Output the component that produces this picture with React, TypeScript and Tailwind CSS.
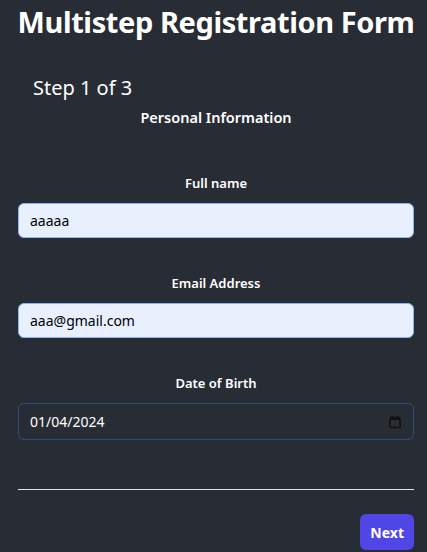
import React from "react";

function CalendarIcon() {
  return (
    <svg width="14" height="14" viewBox="0 0 14 14" fill="none">
      <rect x="2" y="2.5" width="10" height="10" rx="1" stroke="#111" strokeWidth="1.6" />
      <rect x="2" y="2.5" width="10" height="2.5" fill="#111" />
      <rect x="3.5" y="0.8" width="1.5" height="2.5" fill="#111" />
      <rect x="9" y="0.8" width="1.5" height="2.5" fill="#111" />
    </svg>
  );
}

export default function App() {
  return (
    <div
      className="h-[552px] w-[427px] bg-[#282c34] text-white overflow-hidden"
      style={{ fontFamily: '"Noto Sans", "Open Sans", sans-serif' }}
    >
      <div className="pl-[18px] pr-[13px]">
        <h1 className="-mx-[10px] whitespace-nowrap text-center text-[29px] font-bold leading-[44px] tracking-[-0.4px]">
          Multistep Registration Form
        </h1>
        <div className="mt-[30px] pl-[15px] text-[20px] leading-[28px]">Step 1 of 3</div>
        <div className="text-center text-[14.5px] font-semibold leading-[20px] mt-[5px]">
          Personal Information
        </div>

        <div className="mt-[47px] flex flex-col">
          <label className="text-center text-[13px] font-semibold leading-[18px]">Full name</label>
          <input
            readOnly
            defaultValue="aaaaa"
            className="mt-[11px] h-[35px] w-full rounded-[6px] border border-[#8ab4f8] bg-[#e8f0fe] px-[11px] text-[14px] text-black outline-none"
          />
          <label className="mt-[36px] text-center text-[13px] font-semibold leading-[18px]">Email Address</label>
          <input
            readOnly
            defaultValue="aaa@gmail.com"
            className="mt-[11px] h-[35px] w-full rounded-[6px] border border-[#8ab4f8] bg-[#e8f0fe] px-[11px] text-[14px] text-black outline-none"
          />
          <label className="mt-[36px] text-center text-[13px] font-semibold leading-[18px]">Date of Birth</label>
          <div className="mt-[11px] flex h-[37px] w-full items-center justify-between rounded-[6px] border border-[#2f4a7a] px-[11px] text-[14px] text-white">
            <span>01/04/2024</span>
            <CalendarIcon />
          </div>
        </div>

        <div className="mt-[49px] h-px w-full bg-[#e5e5e5]" />

        <div className="mt-[24px] flex justify-end">
          <button className="h-[36px] rounded-[6px] bg-[#4f46e5] px-[10px] text-[14px] font-bold text-white">
            Next
          </button>
        </div>
      </div>
    </div>
  );
}
